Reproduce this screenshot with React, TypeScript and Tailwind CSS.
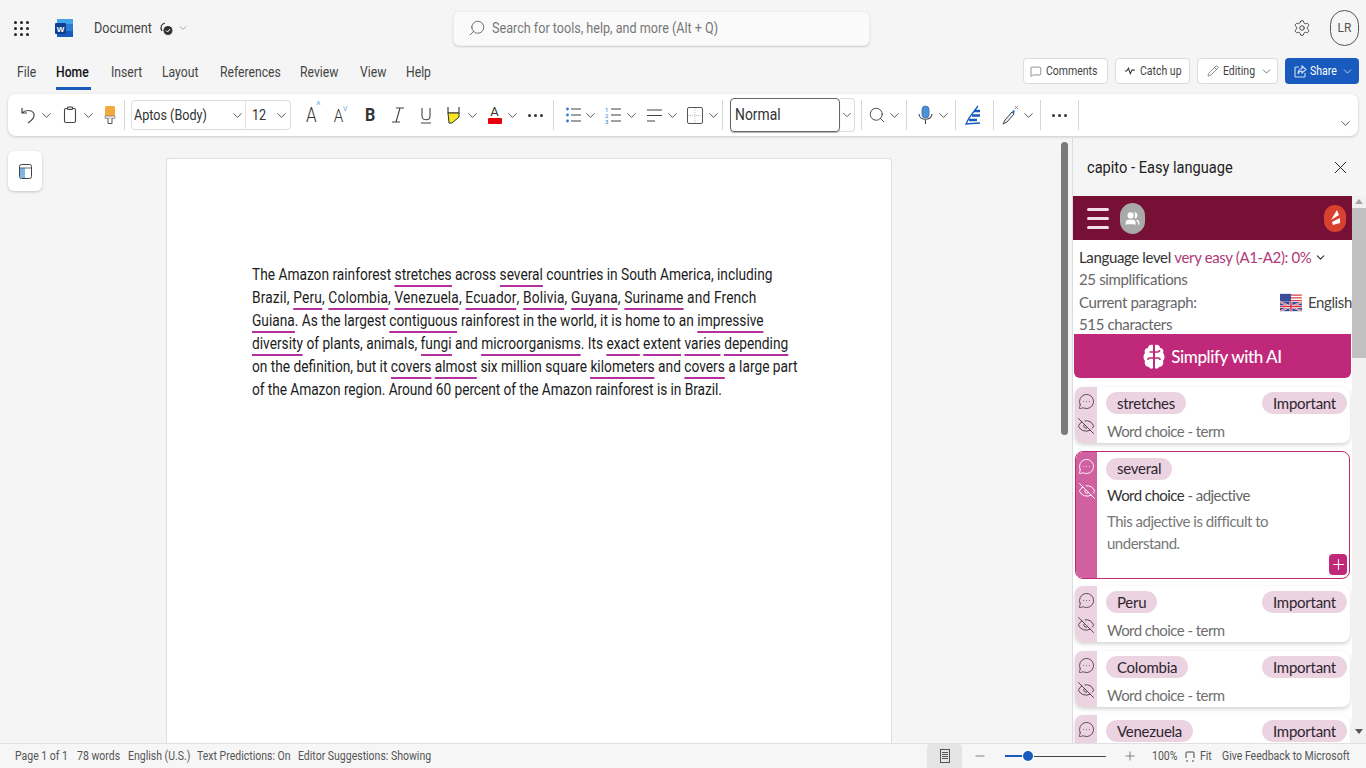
import React from "react";
import { ChevronDown, Search, Settings, MessageSquare, Pencil, Plus, Minus, X, MessageCircleMore, EyeOff, Users } from "lucide-react";

const Cell = ({ className, children }: { className: string; children?: React.ReactNode }) => (
  <div className={`flex items-center justify-center shrink-0 ${className}`}>{children}</div>
);
const Sq = ({ className = "", children }: { className?: string; children: React.ReactNode }) => (
  <span className={`inline-block origin-left scale-x-[0.84] whitespace-nowrap ${className}`}>{children}</span>
);
const Chev = () => (
  <Cell className="w-[16px]"><ChevronDown size={15} strokeWidth={1.3} color="#333" /></Cell>
);
const Sep = () => <div className="w-px h-[30px] bg-[#d6d6d6] shrink-0" />;
const Dots = () => (
  <div className="flex gap-[3px]">
    <i className="w-[3px] h-[3px] rounded-full bg-[#333]" />
    <i className="w-[3px] h-[3px] rounded-full bg-[#333]" />
    <i className="w-[3px] h-[3px] rounded-full bg-[#333]" />
  </div>
);

const Doc = ({ text, className = "" }: { text: string; className?: string }) => (
  <div className={`h-[23px] leading-[21px] whitespace-nowrap ${className}`}>
    {text.split(/(\[[^\]]+\])/).map((p, i) =>
      p.startsWith("[") ? (
        <span key={i} className="inline-block leading-[20px] border-b-2 border-[#b5309f]">{p.slice(1, -1)}</span>
      ) : (
        <span key={i} className="whitespace-pre">{p}</span>
      )
    )}
  </div>
);

const WordIcon = () => (
  <svg width="20" height="20" viewBox="0 0 20 20">
    <rect x="3" y="1" width="16" height="18" rx="1.5" fill="#2b7cd3" />
    <rect x="3" y="1" width="16" height="5" fill="#41a5ee" />
    <rect x="3" y="13" width="16" height="6" fill="#185abd" />
    <rect x="1" y="5" width="11" height="11" rx="1" fill="#103f91" />
    <text x="6.5" y="13.5" fontSize="8" fontWeight="700" fill="#fff" textAnchor="middle" fontFamily="Liberation Sans">W</text>
  </svg>
);

const Flag = () => (
  <svg width="24" height="19" viewBox="0 0 24 19">
    <rect width="24" height="19" fill="#fff" />
    <path d="M0 1.5h24M0 4.5h24M0 7.5h24" stroke="#d8404a" strokeWidth="1.4" />
    <rect width="12" height="8.5" fill="#3a4f9a" />
    <rect y="9" width="24" height="10" fill="#2b4a9b" />
    <path d="M0 19 L24 9 M0 9 L24 19" stroke="#fff" strokeWidth="1.8" />
    <path d="M0 19 L24 9 M0 9 L24 19" stroke="#d8303a" strokeWidth=".8" />
    <path d="M12 9v10M0 14h24" stroke="#fff" strokeWidth="3" />
    <path d="M12 9v10M0 14h24" stroke="#d8303a" strokeWidth="1.6" />
  </svg>
);

const Brain = () => (
  <svg width="22" height="26" viewBox="0 0 22 26">
    <path d="M10 1C7 0 5 2 5 4 2 4 1 7 2 9 0 11 0 15 2 17c-1 3 1 6 4 6 1 2 3 2 4 1zM12 1c3-1 5 1 5 3 3 0 4 3 3 5 2 2 2 6 0 8 1 3-1 6-4 6-1 2-3 2-4 1z" fill="#fff" />
    <path d="M10 8H6.5M10 14H7c-1 0-2 1-2 2M12 8h2.5c1 0 2-1 2-2M12 14h3c1 0 2 1 2 2" stroke="#c0297a" strokeWidth="1.6" fill="none" />
  </svg>
);

const Pill = ({ children }: { children: React.ReactNode }) => (
  <span className="inline-flex items-center h-[22px] px-[11px] rounded-full bg-[#ecd3e1] text-[#2e2530] text-[15px] tracking-[-0.25px] leading-none">{children}</span>
);

const Card = ({ word, mb }: { word: string; mb: string }) => (
  <div className={`flex ml-[2px] w-[275px] shrink-0 bg-white rounded-[8px] overflow-hidden shadow-[0_2px_4px_rgba(0,0,0,0.18)] ${mb}`}>
    <div className="w-[22px] shrink-0 bg-[#ecd3e1] flex flex-col items-center pt-[6px] gap-[7px] text-[#4d4049]">
      <MessageCircleMore size={17} strokeWidth={1.25} />
      <EyeOff size={18} strokeWidth={1.25} />
    </div>
    <div className="flex-1 pl-[9px] pr-[3px] pt-[5px]">
      <div className="flex justify-between">
        <Pill>{word}</Pill>
        <Pill>Important</Pill>
      </div>
      <div className="mt-[7px] pl-[1px] text-[15px] tracking-[-0.55px] leading-[20px] text-[#6f6f6f]">Word choice - term</div>
    </div>
  </div>
);

export default function App() {
  return (
    <div className="w-[1366px] h-[768px] overflow-hidden flex flex-col bg-[#f5f5f5] text-[#333] font-['Roboto',sans-serif]">
      {/* title bar */}
      <div className="h-[56px] shrink-0 flex items-center">
        <div className="ml-[14px] grid grid-cols-3 gap-[3px] w-[15px] shrink-0">
          {Array.from({ length: 9 }).map((_, i) => <i key={i} className="w-[3px] h-[3px] rounded-full bg-[#222]" />)}
        </div>
        <div className="ml-[25px] shrink-0"><WordIcon /></div>
        <div className="ml-[20px] text-[15px] text-[#444] w-[65px] shrink-0"><Sq>Document</Sq></div>
        <svg className="shrink-0" width="15" height="15" viewBox="0 0 15 15">
          <path d="M6 2A5 5 0 0 0 3 10" stroke="#333" strokeWidth="1.2" fill="none" />
          <circle cx="9" cy="9.5" r="4.5" fill="#333" />
          <path d="M7 9.5l1.5 1.5 2.5-3" stroke="#fff" strokeWidth="1" fill="none" />
        </svg>
        <div className="ml-[3px]"><ChevronDown size={12} strokeWidth={1.2} color="#777" /></div>
        <div className="ml-[264px] w-[417px] h-[35px] bg-[#fafafa] rounded-[6px] border border-[#efefef] shadow-[0_1px_2px_rgba(0,0,0,0.16)] flex items-center pl-[14px]">
          <Search size={18} strokeWidth={1.1} color="#555" className="-scale-x-100" />
          <span className="ml-[6px] text-[15px] text-[#777]"><Sq>Search for tools, help, and more (Alt + Q)</Sq></span>
        </div>
        <div className="ml-auto"><Settings size={18} strokeWidth={1.15} color="#333" /></div>
        <div className="ml-[19px] mr-[7px] w-[29px] h-[36px] rounded-full border border-[#555] flex items-center justify-center text-[12px] text-[#555]">LR</div>
      </div>

      {/* tabs */}
      <div className="h-[38px] shrink-0 flex items-start text-[14.5px] text-[#444]">
        <div className="ml-[17px] w-[39px] pt-[6px] shrink-0"><Sq>File</Sq></div>
        <div className="w-[55px] pt-[6px] shrink-0">
          <div className="w-[35px] h-[28px] border-b-[3px] border-[#185abd] text-[#111] font-medium"><Sq>Home</Sq></div>
        </div>
        <div className="w-[51px] pt-[6px] shrink-0"><Sq>Insert</Sq></div>
        <div className="w-[58px] pt-[6px] shrink-0"><Sq>Layout</Sq></div>
        <div className="w-[80px] pt-[6px] shrink-0"><Sq>References</Sq></div>
        <div className="w-[60px] pt-[6px] shrink-0"><Sq>Review</Sq></div>
        <div className="w-[46px] pt-[6px] shrink-0"><Sq>View</Sq></div>
        <div className="w-[40px] pt-[6px] shrink-0"><Sq>Help</Sq></div>
        <div className="ml-auto flex gap-[7px] pt-[2px] pr-[7px] text-[12.5px]">
          <div className="w-[85px] h-[26px] bg-white border border-[#dcdcdc] rounded-[4px] flex items-center pl-[6px]"><MessageSquare size={15} strokeWidth={1.2} /><span className="ml-[4px]"><Sq>Comments</Sq></span></div>
          <div className="w-[75px] h-[26px] bg-white border border-[#dcdcdc] rounded-[4px] flex items-center pl-[8px]">
            <svg width="14" height="10" viewBox="0 0 14 10"><path d="M1 5h2l2-3 2 6 2-4h3" stroke="#333" strokeWidth="1.2" fill="none" /></svg><span className="ml-[3px]"><Sq>Catch up</Sq></span>
          </div>
          <div className="w-[81px] h-[26px] bg-white border border-[#dcdcdc] rounded-[4px] flex items-center pl-[9px]"><Pencil size={12} strokeWidth={1.2} /><span className="ml-[4px] w-[37px]"><Sq>Editing</Sq></span><ChevronDown size={13} strokeWidth={1.3} /></div>
          <div className="w-[74px] h-[26px] bg-[#185abd] text-white rounded-[4px] flex items-center pl-[8px]">
            <svg width="15" height="15" viewBox="0 0 15 15" fill="none" stroke="#cfe0f7" strokeWidth="1.1"><path d="M6 3H3a1 1 0 0 0-1 1v8a1 1 0 0 0 1 1h8a1 1 0 0 0 1-1V9" /><path d="M9 2l4 3.5L9 9V7C7 7 5.500 8 5 10c0-3 1.500-5 4-5.500z" /></svg>
            <span className="ml-[2px] w-[31px]"><Sq>Share</Sq></span><ChevronDown size={13} strokeWidth={1.3} />
          </div>
        </div>
      </div>

      {/* ribbon */}
      <div className="h-[42px] mx-[8px] shrink-0 bg-white rounded-[8px] shadow-[0_1px_3px_rgba(0,0,0,0.18)] flex items-center text-[#333]">
        <Cell className="ml-[10px] w-[20px]">
          <svg width="16" height="18" viewBox="0 0 16 18" fill="none" stroke="#444" strokeWidth="1.2"><path d="M2 2v5h5M2 7c3-3 10-4 12 1 1 4-3 7-6 9" /></svg>
        </Cell>
        <Chev />
        <Cell className="ml-[6px] w-[20px]">
          <svg width="14" height="18" viewBox="0 0 14 18" fill="none" stroke="#444" strokeWidth="1.1"><rect x="1.500" y="2.500" width="11" height="14" rx="1.500" /><rect x="4.500" y="1" width="5" height="2.500" rx=".8" fill="#ddd" /></svg>
        </Cell>
        <Chev />
        <Cell className="ml-[4px] w-[20px]">
          <svg width="12" height="20" viewBox="0 0 12 20"><rect x="1" y="1" width="10" height="10" rx="1.500" fill="#f2a93b" /><rect x="1" y="11" width="10" height="2.500" fill="#e8e8e8" stroke="#666" strokeWidth=".6" /><path d="M4 13.500v5h4v-5" fill="#fff" stroke="#555" strokeWidth="1" /></svg>
        </Cell>
        <div className="ml-[4px]"><Sep /></div>
        <div className="ml-[6px] w-[160px] h-[30px] flex border border-[#dcdcdc] rounded-[4px] text-[15px] shrink-0">
          <div className="w-[114px] flex items-center pl-[2px] border-r border-[#e4e4e4]"><span className="flex-1"><Sq>Aptos (Body)</Sq></span><ChevronDown size={15} strokeWidth={1.3} /></div>
          <div className="flex-1 flex items-center pl-[6px]"><span className="flex-1"><Sq>12</Sq></span><ChevronDown size={15} strokeWidth={1.3} className="mr-[1px]" /></div>
        </div>
        <Cell className="ml-[6px] w-[28px] text-[20px] font-light relative"><span className="scale-x-[0.85]">A</span><span className="absolute left-[19px] top-[-2px] text-[11px] text-[#3a8fd0]">^</span></Cell>
        <Cell className="w-[28px] text-[18px] font-light relative"><span className="scale-x-[0.85]">A</span><span className="absolute left-[18px] top-[0px] text-[9px] text-[#3a8fd0]">v</span></Cell>
        <Cell className="ml-[3px] w-[28px] text-[19px] font-bold"><span className="scale-x-[0.85]">B</span></Cell>
        <Cell className="w-[28px]">
          <svg width="14" height="16" viewBox="0 0 14 16" fill="none" stroke="#444" strokeWidth="1.1"><path d="M5 1h8M9 1L5 15M1 15h8" /></svg>
        </Cell>
        <Cell className="w-[28px]">
          <svg width="12" height="17" viewBox="0 0 12 17" fill="none" stroke="#444" strokeWidth="1.1"><path d="M2 1v8c0 5 8 5 8 0V1M1 16h10" /></svg>
        </Cell>
        <Cell className="ml-[2px] w-[22px]">
          <svg width="15" height="18" viewBox="0 0 15 18"><path d="M2 1v6h11V1" fill="none" stroke="#333" strokeWidth="1.1" /><path d="M2 7h11v4l-7 6-3 0z" fill="#f6e71e" stroke="#333" strokeWidth="1" /></svg>
        </Cell>
        <Chev />
        <Cell className="ml-[5px] w-[19px] flex-col">
          <span className="text-[13px] leading-[12px]">A</span>
          <i className="w-[14px] h-[6px] rounded-[1px] bg-[#e8000b]" />
        </Cell>
        <Chev />
        <Cell className="w-[30px]"><Dots /></Cell>
        <div className="ml-[3px]"><Sep /></div>
        <Cell className="ml-[10px] w-[18px]">
          <svg width="15" height="16" viewBox="0 0 15 16"><circle cx="1.500" cy="2" r="1.400" fill="#2b7cd3" /><circle cx="1.500" cy="8" r="1.400" fill="#2b7cd3" /><circle cx="1.500" cy="14" r="1.400" fill="#2b7cd3" /><path d="M5 2h10M5 8h10M5 14h10" stroke="#444" strokeWidth="1.1" /></svg>
        </Cell>
        <Chev />
        <Cell className="ml-[5px] w-[20px]">
          <svg width="16" height="18" viewBox="0 0 16 18"><text x="0" y="6" fontSize="6" fill="#2b7cd3" fontFamily="Roboto">1</text><text x="0" y="12" fontSize="6" fill="#2b7cd3" fontFamily="Roboto">2</text><text x="0" y="18" fontSize="6" fill="#2b7cd3" fontFamily="Roboto">3</text><path d="M6 3h10M6 9h10M6 15h10" stroke="#444" strokeWidth="1.1" /></svg>
        </Cell>
        <Chev />
        <Cell className="ml-[5px] w-[20px]">
          <svg width="15" height="15" viewBox="0 0 15 15" stroke="#444" strokeWidth="1.1"><path d="M0 2h15M0 7.500h15M0 13h8" /></svg>
        </Cell>
        <Chev />
        <Cell className="ml-[5px] w-[20px]">
          <svg width="16" height="17" viewBox="0 0 16 17" fill="none"><rect x=".5" y=".5" width="15" height="16" rx="1.500" stroke="#555" /><path d="M8 1v15M1 8.500h14" stroke="#aaa" strokeWidth=".7" strokeDasharray="1 1" /></svg>
        </Cell>
        <Chev />
        <div className="ml-[1px]"><Sep /></div>
        <div className="ml-[7px] w-[110px] h-[34px] border border-[#666] rounded-[4px] shadow-[0_1px_1px_rgba(0,0,0,0.3)] flex items-center pl-[4px] text-[16.5px] shrink-0"><Sq>Normal</Sq></div>
        <div className="w-[15px] h-[34px] flex items-center justify-center border border-l-0 border-[#dcdcdc] rounded-r-[4px] shrink-0"><ChevronDown size={14} strokeWidth={1.3} /></div>
        <div className="ml-[6px]"><Sep /></div>
        <Cell className="ml-[6px] w-[18px]"><Search size={18} strokeWidth={1.15} /></Cell>
        <Chev />
        <div className="ml-[4px]"><Sep /></div>
        <Cell className="ml-[8px] w-[20px]">
          <svg width="15" height="20" viewBox="0 0 15 20" fill="none"><rect x="4" y="1" width="7" height="12" rx="3.500" fill="#4f8fd8" stroke="#2e6db8" strokeWidth=".8" /><path d="M1 9c0 7 13 7 13 0M7.500 15v4" stroke="#444" strokeWidth="1.1" /></svg>
        </Cell>
        <Chev />
        <div className="ml-[4px]"><Sep /></div>
        <Cell className="ml-[8px] w-[20px]">
          <svg width="18" height="20" viewBox="0 0 18 20" fill="none"><path d="M13 1L4 13 1 19l14-1" stroke="#185abd" strokeWidth="1.3" /><path d="M9 6h6M7 10.500h8M4 15h8" stroke="#185abd" strokeWidth="2.400" /></svg>
        </Cell>
        <div className="ml-[9px]"><Sep /></div>
        <Cell className="ml-[6px] w-[20px]">
          <svg width="18" height="20" viewBox="0 0 18 20" fill="none"><path d="M11 7L4 15l-2 4 4-2 7-8z" fill="#e8eef6" stroke="#444" strokeWidth="1" /><path d="M11 7l2 2 1-3-2-1z" fill="#2b7cd3" /><path d="M14 1l3 3M17 1l-3 3" stroke="#777" strokeWidth=".8" /></svg>
        </Cell>
        <Chev />
        <div className="ml-[4px]"><Sep /></div>
        <Cell className="ml-[3px] w-[30px]"><Dots /></Cell>
        <div className="ml-[4px]"><Sep /></div>
        <div className="ml-auto mr-[5px] mt-[16px]"><ChevronDown size={15} strokeWidth={1.3} /></div>
      </div>

      {/* body */}
      <div className="flex-1 min-h-0 flex mt-px">
        <div className="w-[1072px] shrink-0 flex">
          <div className="w-[166px] shrink-0 pl-[8px] pt-[14px]">
            <div className="w-[34px] h-[40px] bg-white rounded-[6px] shadow-[0_1px_3px_rgba(0,0,0,0.2)] flex items-center justify-center">
              <svg width="13" height="15" viewBox="0 0 13 15"><rect x=".5" y=".5" width="12" height="14" rx="2" fill="#fff" stroke="#444" /><rect x="1" y="4" width="5" height="10" fill="#7fb4e6" /><path d="M1 4h11" stroke="#444" strokeWidth=".8" /></svg>
            </div>
          </div>
          <div className="w-[726px] mt-[21px] bg-white border border-b-0 border-[#dedede] rounded-t-[3px] shrink-0 pl-[85px] pt-[105px]">
            <div className="origin-left scale-x-[0.858] text-[16px] text-[#1c1c1c]">
              <Doc text="The Amazon rainforest [stretches] across [several] countries in South America, including" />
              <Doc className="tracking-[0.18px]" text="Brazil, [Peru], [Colombia], [Venezuela], [Ecuador], [Bolivia], [Guyana], [Suriname] and French" />
              <Doc text="[Guiana]. As the largest [contiguous] rainforest in the world, it is home to an [impressive]" />
              <Doc text="[diversity] of plants, animals, [fungi] and [microorganisms]. Its [exact] [extent] [varies] [depending]" />
              <Doc text="on the definition, but it [covers] [almost] six million square [kilometers] and [covers] a large part" />
              <Doc className="tracking-[-0.07px]" text="of the Amazon region. Around 60 percent of the Amazon rainforest is in Brazil." />
            </div>
          </div>
          <div className="ml-auto mr-[4px] mt-[5px] w-[7px] h-[293px] rounded-full bg-[#7b7b7b]" />
        </div>

        {/* panel */}
        <div className="flex-1 min-w-0 flex flex-col border-l border-[#dcdcdc]">
          <div className="h-[59px] shrink-0 flex items-center pl-[14px] pr-[15px] pt-[2px] justify-between text-[17px] text-[#222]">
            <span className="inline-block origin-left scale-x-[0.86] whitespace-nowrap">capito - Easy language</span>
            <X size={21} strokeWidth={1.1} />
          </div>
          <div className="flex-1 min-h-0 flex font-['Lato',sans-serif]">
            <div className="w-[279px] shrink-0 bg-white flex flex-col overflow-hidden">
              <div className="h-[44px] shrink-0 bg-[#771035] flex items-center pl-[14px] pr-[6px]">
                <div className="flex flex-col gap-[6px] w-[22px]">
                  <i className="h-[3px] rounded bg-[#f4dfe8]" /><i className="h-[3px] rounded bg-[#f4dfe8]" /><i className="h-[3px] rounded bg-[#f4dfe8]" />
                </div>
                <div className="ml-[11px] w-[25px] h-[31px] rounded-full bg-[#a9a9a9] flex items-center justify-center">
                  <Users size={15} color="#fff" fill="#fff" />
                </div>
                <div className="ml-auto w-[22px] h-[27px] rounded-full bg-[#d8402f] flex items-center justify-center">
                  <svg width="14" height="18" viewBox="0 0 14 18" fill="#fff"><path d="M9 1l2 5-8 5zM4 13l8-4 0 5-7 2z" /></svg>
                </div>
              </div>
              <div className="h-[94px] shrink-0 pl-[6px] pt-[6px] text-[15px] tracking-[-0.36px] leading-[22.4px] text-[#666]">
                <div className="text-[#333] whitespace-nowrap flex items-center">Language level&nbsp;<span className="text-[#b03878]">very easy (A1-A2): 0%</span><ChevronDown size={13} strokeWidth={2} className="ml-[3px]" /></div>
                <div>25 simplifications</div>
                <div className="flex items-center">
                  <span className="w-[201px] shrink-0">Current paragraph:</span><Flag /><span className="ml-[6px] text-[#444] whitespace-nowrap">English</span>
                </div>
                <div>515 characters</div>
              </div>
              <div className="h-[44px] shrink-0 mx-px w-[277px] bg-[#c0297a] rounded-b-[6px] flex items-center justify-center gap-[6px] pt-px text-white text-[17px] tracking-[-0.4px] font-medium">
                <Brain />Simplify with AI
              </div>
              <div className="mt-[9px] flex flex-col">
                <Card word="stretches" mb="h-[56px] mb-[8px]" />
                <div className="flex ml-[2px] w-[275px] h-[128px] shrink-0 mb-[7px] bg-white rounded-[8px] overflow-hidden border border-[#c2286f]">
                  <div className="w-[21px] shrink-0 bg-[#d0609f] flex flex-col items-center pt-[6px] gap-[7px] text-white">
                    <MessageCircleMore size={17} strokeWidth={1.3} />
                    <EyeOff size={18} strokeWidth={1.3} />
                  </div>
                  <div className="flex-1 pl-[9px] pt-[4px] relative">
                    <Pill>several</Pill>
                    <div className="mt-[5px] pl-[1px] text-[15px] tracking-[-0.55px] leading-[20px] text-[#333]">Word choice <span className="text-[#666]">- adjective</span></div>
                    <div className="mt-[5px] pl-[1px] w-[190px] text-[15px] tracking-[-0.5px] leading-[22px] text-[#777]">This adjective is difficult to understand.</div>
                    <div className="absolute right-[2px] bottom-[3px] w-[18px] h-[21px] rounded-[4px] bg-[#c0297a] flex items-center justify-center"><Plus size={17} color="#fff" strokeWidth={1.5} /></div>
                  </div>
                </div>
                <Card word="Peru" mb="h-[56px] mb-[9px]" />
                <Card word="Colombia" mb="h-[56px] mb-[8px]" />
                <Card word="Venezuela" mb="h-[56px]" />
              </div>
            </div>
            <div className="flex-1 bg-[#f1f1f1] flex flex-col items-center pt-[3px]">
              <div className="w-0 h-0 border-x-[4px] border-x-transparent border-b-[5px] border-b-[#a5a5a5]" />
              <div className="mt-[4px] w-full h-[150px] bg-[#c1c1c1]" />
              <div className="mt-auto mb-[9px] w-0 h-0 border-x-[4px] border-x-transparent border-t-[5px] border-t-[#555]" />
            </div>
          </div>
        </div>
      </div>

      {/* status bar */}
      <div className="h-[25px] shrink-0 flex items-center border-t border-[#e0e0e0] bg-[#f6f6f6] text-[12.5px] text-[#555]">
        <span className="ml-[15px] w-[62px] shrink-0"><Sq>Page 1 of 1</Sq></span>
        <span className="w-[51px] shrink-0"><Sq>78 words</Sq></span>
        <span className="w-[69px] shrink-0"><Sq>English (U.S.)</Sq></span>
        <span className="w-[101px] shrink-0"><Sq>Text Predictions: On</Sq></span>
        <span className="w-[135px] shrink-0"><Sq>Editor Suggestions: Showing</Sq></span>
        <div className="ml-auto w-[35px] h-full bg-[#e4e4e4] rounded-t-[4px] flex items-center justify-center shrink-0">
          <svg width="10" height="14" viewBox="0 0 10 14" fill="none" stroke="#444" strokeWidth=".9"><rect x=".5" y=".5" width="9" height="13" /><path d="M2 3.500h6M2 5.500h6M2 7.500h6M2 9.500h6" /></svg>
        </div>
        <div className="ml-[11px] shrink-0"><Minus size={14} strokeWidth={1.2} /></div>
        <div className="ml-[18px] w-[101px] h-[14px] relative flex items-center shrink-0">
          <div className="w-full h-px bg-[#444]" />
          <div className="absolute left-0 w-[20px] h-[2px] bg-[#185abd]" />
          <div className="absolute left-[18px] w-[10px] h-[10px] rounded-full bg-[#185abd] ring-1 ring-white" />
        </div>
        <div className="ml-[17px] shrink-0"><Plus size={14} strokeWidth={1.2} /></div>
        <span className="ml-[15px] w-[26px] shrink-0"><Sq>100%</Sq></span>
        <svg className="ml-[7px] shrink-0" width="10" height="11" viewBox="0 0 10 11" fill="none" stroke="#444" strokeWidth="1"><path d="M1 7V2a1 1 0 0 1 1-1h6a1 1 0 0 1 1 1v5M1 10h2M7 10h2" /></svg>
        <span className="ml-[5px] w-[13px] shrink-0"><Sq>Fit</Sq></span>
        <span className="ml-[9px] w-[129px] mr-[15px] shrink-0"><Sq>Give Feedback to Microsoft</Sq></span>
      </div>
    </div>
  );
}
